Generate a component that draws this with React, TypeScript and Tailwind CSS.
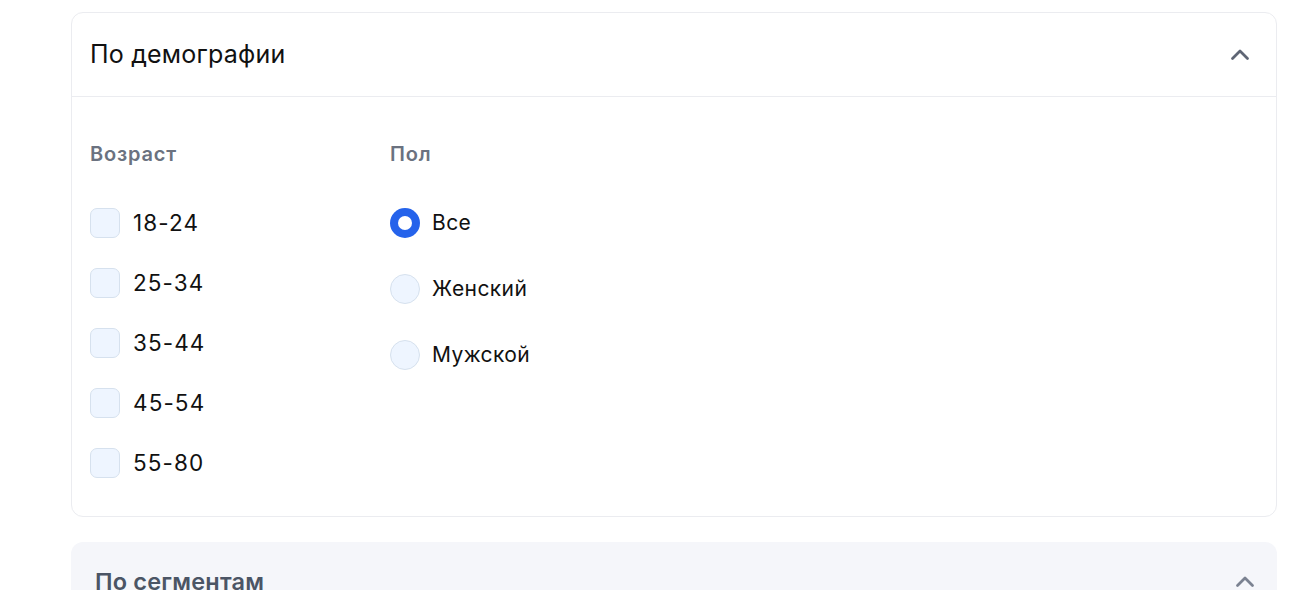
import React, { useState } from 'react';

const ages = ['18-24', '25-34', '35-44', '45-54', '55-80'];
const genders = ['Все', 'Женский', 'Мужской'];

const Chevron: React.FC<{ className?: string }> = ({ className }) => (
  <svg width="24" height="24" viewBox="0 0 24 24" fill="none" stroke="currentColor" strokeWidth="2.8" strokeLinecap="round" strokeLinejoin="round" className={className}>
    <path d="M4.5 15.5l7.5-7.5 7.5 7.5" />
  </svg>
);

const App: React.FC = () => {
  const [checked, setChecked] = useState<string[]>([]);
  const [gender, setGender] = useState('Все');

  const toggle = (a: string) =>
    setChecked(prev => (prev.includes(a) ? prev.filter(x => x !== a) : [...prev, a]));

  return (
    <div className="min-h-screen bg-white font-['Inter',sans-serif] text-black pt-3 overflow-hidden h-[590px]">
      <div className="ml-[71px] w-[1206px]">
        {/* Demography card */}
        <div className="rounded-xl border border-[#ebecf0] bg-white">
          <div className="flex items-center justify-between h-[84px] pl-[18px] pr-[24px] border-b border-[#ebecf0]">
            <h2 className="text-[25px] font-normal tracking-[0.2px] text-[#111]">По демографии</h2>
            <Chevron className="text-[#5f6675]" />
          </div>

          <div className="flex pl-[18px] pt-[43px] pb-[38px]">
            <div className="w-[300px]">
              <div className="text-[20px] font-semibold tracking-[0.8px] text-[#6b7280] leading-7">Возраст</div>
              <div className="mt-[40px] flex flex-col gap-[30px]">
                {ages.map(a => (
                  <label key={a} className="flex items-center gap-[13px] cursor-pointer">
                    <span
                      onClick={() => toggle(a)}
                      className={`w-[30px] h-[30px] rounded-[7px] border ${checked.includes(a) ? 'bg-[#2563eb] border-[#2563eb]' : 'bg-[#eef5ff] border-[#d6e1ee]'}`}
                    />
                    <span className="text-[22.5px] tracking-[1.1px] text-[#111] leading-[30px]">{a}</span>
                  </label>
                ))}
              </div>
            </div>

            <div>
              <div className="text-[20px] font-semibold tracking-[0.8px] text-[#6b7280] leading-7">Пол</div>
              <div className="mt-[40px] flex flex-col gap-[36px]">
                {genders.map(g => (
                  <label key={g} className="flex items-center gap-[12px] cursor-pointer" onClick={() => setGender(g)}>
                    {gender === g ? (
                      <span className="w-[30px] h-[30px] rounded-full bg-[#2563eb] flex items-center justify-center">
                        <span className="w-[14px] h-[14px] rounded-full bg-white" />
                      </span>
                    ) : (
                      <span className="w-[30px] h-[30px] rounded-full bg-[#eef5ff] border border-[#d6e1ee]" />
                    )}
                    <span className="text-[21px] tracking-[0.4px] text-[#111] leading-[30px]">{g}</span>
                  </label>
                ))}
              </div>
            </div>
          </div>
        </div>

        {/* Segments card (collapsed) */}
        <div className="mt-[25px] rounded-xl bg-[#f5f6fa] h-[120px]">
          <div className="flex items-center justify-between h-[80px] pl-[24px] pr-[20px]">
            <h2 className="text-[23.5px] font-semibold tracking-[0.2px] text-[#4b5565]">По сегментам</h2>
            <Chevron className="text-[#7b8291]" />
          </div>
        </div>
      </div>
    </div>
  );
};

export default App;
